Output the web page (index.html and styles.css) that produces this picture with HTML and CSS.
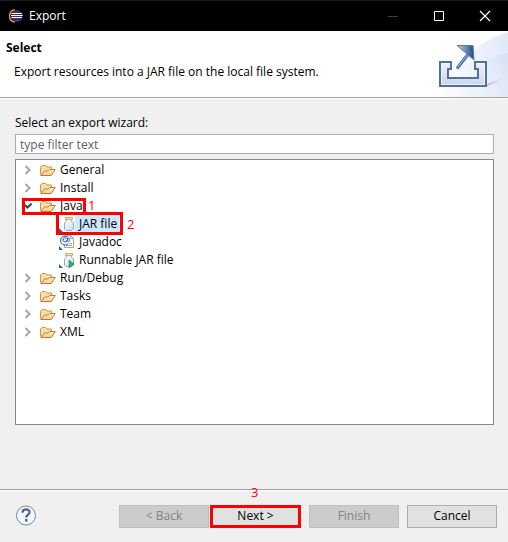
FILE: index.html
```html
<!DOCTYPE html>
<html lang="en">
<head>
<meta charset="utf-8">
<meta name="viewport" content="width=device-width, initial-scale=1">
<title>Export</title>
<link rel="stylesheet" href="styles.css">
</head>
<body>
<svg class="defs" aria-hidden="true">
  <defs>
    <linearGradient id="gold" x1="0" y1="0" x2="0" y2="1"><stop offset="0" stop-color="#fff3cb"/><stop offset="1" stop-color="#f3cb7c"/></linearGradient>
    <linearGradient id="glass" x1="0" y1="0" x2="1" y2="1"><stop offset="0" stop-color="#ffffff"/><stop offset="1" stop-color="#c9def3"/></linearGradient>
    <symbol id="right" viewBox="0 0 8 10"><path d="M1.500 1 5.500 5 1.500 9" fill="none" stroke="#a6a6a6" stroke-width="2"/></symbol>
    <symbol id="down" viewBox="0 0 8 10"><path d="M1 4 3.500 6.500 7.500 2.500" fill="none" stroke="#404040" stroke-width="2"/></symbol>
    <symbol id="folder" viewBox="0 0 16 16">
      <path d="M.5 12.500V5L2 3.500h3.500L7 5h4.500v3" fill="#f9dfa4" stroke="#c9964b"/>
      <path d="M.8 13.500 4.500 9H8l1.500-1.500h5.800l-4 6z" fill="url(#gold)" stroke="#bd7d36" stroke-linejoin="round"/>
    </symbol>
    <symbol id="jar" viewBox="0 0 18 16">
      <path d="M7.500 3.500h5v1.500l2 2v6l-1.500 1.500H7L5.500 13V7l2-2z" fill="url(#glass)" stroke="#8fa9c6"/>
      <path d="M6.500 1.500h7v2h-7z" fill="#f7e3af" stroke="#cfaf68"/>
      <path d="M0 12v4h4z" fill="#2464a0"/>
    </symbol>
    <symbol id="doc" viewBox="0 0 18 16">
      <path d="M5.500 1.500h6l3 3v9h-9z" fill="#fffdf2" stroke="#b5a67c"/>
      <path d="M11.500 1.500v3h3M10 9.500h3M7 11.500h6" fill="none" stroke="#8aa5ca"/>
      <circle cx="6" cy="6" r="4.500" fill="#e7f1fa"/>
      <path d="M9 10A4.500 4.500 0 1 1 10.500 6c0 2.200-2.400 2.200-2.200.3L8.700 4M8 6A2 2 0 1 1 7.500 4.500" fill="none" stroke="#2864a0"/>
      <path d="M0 12v4h4z" fill="#2464a0"/>
    </symbol>
  </defs>
</svg>
<main class="dialog">
  <header class="titlebar">
    <svg class="logo" viewBox="0 0 14 14" aria-hidden="true">
      <path d="M6 .8C-1.200 2-1.200 12 6 13.200" fill="none" stroke="#f7941e" stroke-width="1.400"/>
      <circle cx="7.700" cy="7" r="5.900" fill="#3b2f73"/>
      <path d="M2.500 4.500h10.500M2 6.500h11.800M2.500 8.500h10.500" stroke="#fff"/>
    </svg>
    <h1 class="caption">Export</h1>
    <button class="window-button" type="button" aria-label="Minimize" disabled><svg viewBox="0 0 12 12"><path d="M1 6.500h10" stroke="#404040"/></svg></button>
    <button class="window-button" type="button" aria-label="Maximize"><svg viewBox="0 0 12 12"><path d="M1.500 1.500h9v9h-9z" fill="none" stroke="#fff"/></svg></button>
    <button class="window-button" type="button" aria-label="Close"><svg viewBox="0 0 12 12"><path d="m1 1 10 10M11 1 1 11" stroke="#fff" stroke-width="1.200"/></svg></button>
  </header>

  <section class="banner">
    <div class="intro">
      <h2 class="heading">Select</h2>
      <p class="description">Export resources into a JAR file on the local file system.</p>
    </div>
    <svg class="art" viewBox="0 0 75 66" aria-hidden="true">
      <defs>
        <linearGradient id="sky" x1="0" y1="0" x2="1" y2="0"><stop offset="0" stop-color="#fff"/><stop offset="1" stop-color="#e0e8f8"/></linearGradient>
        <linearGradient id="sweep" x1="0" y1="1" x2="1" y2="0"><stop offset="0" stop-color="#fff" stop-opacity="0"/><stop offset="1" stop-color="#ccd9f4"/></linearGradient>
        <linearGradient id="tray" x1="0" y1="0" x2="0" y2="1"><stop offset="0" stop-color="#edf2fa"/><stop offset="1" stop-color="#cbd6e9"/></linearGradient>
        <linearGradient id="shade" x1="0" y1="0" x2="1" y2="0"><stop offset="0" stop-color="#c4b9c6"/><stop offset="1" stop-color="#dfe5f5" stop-opacity="0"/></linearGradient>
        <linearGradient id="tip" x1="0" y1="0" x2="1" y2="0"><stop offset="0" stop-color="#d0ddec"/><stop offset=".5" stop-color="#7390b8"/><stop offset="1" stop-color="#1d4784"/></linearGradient>
      </defs>
      <path d="M75 1C55 7 38 19 22 35L5 66h70z" fill="url(#sky)"/>
      <path d="M75 22C55 26 42 38 30 66h45z" fill="url(#sweep)" opacity=".55"/>
      <path d="M54 53 73 45 66 51 54 55z" fill="url(#shade)"/>
      <path d="M7 31h11v7h-3v9h30v-9h-3v-7h11v24H7z" fill="url(#tray)" stroke="#4a72a9" stroke-width="2"/>
      <path d="M16.500 32.500H8.500v21h43v-21h-8" fill="none" stroke="#fff" opacity=".7"/>
      <path d="M24 37.500 36.500 21.500" stroke="#426b9f" stroke-width="3"/>
      <path d="M24.500 36.500 36 22" stroke="#a9c0dd"/>
      <path d="M24 14.500H40L41 29z" fill="url(#tip)" stroke="#587ba8"/>
    </svg>
  </section>

  <section class="content">
    <label class="label" for="filter">Select an export wizard:</label>
    <input class="filter" id="filter" type="text" placeholder="type filter text">
    <ul class="tree" role="tree" aria-label="Export wizards">
      <li class="row" role="treeitem"><svg class="arrow"><use href="#right"/></svg><svg class="folder"><use href="#folder"/></svg><span>General</span></li>
      <li class="row" role="treeitem"><svg class="arrow"><use href="#right"/></svg><svg class="folder"><use href="#folder"/></svg><span>Install</span></li>
      <li role="treeitem" aria-expanded="true">
        <div class="row"><svg class="arrow"><use href="#down"/></svg><svg class="folder"><use href="#folder"/></svg><span>Java</span><span class="mark mark-java"></span><span class="step step-java">1</span></div>
        <ul class="children" role="group">
          <li class="row" role="treeitem" aria-selected="true"><svg class="file"><use href="#jar"/></svg><span class="selected">JAR file</span><span class="mark mark-jar"></span><span class="step step-jar">2</span></li>
          <li class="row" role="treeitem"><svg class="file"><use href="#doc"/></svg><span>Javadoc</span></li>
          <li class="row" role="treeitem"><svg class="file" viewBox="0 0 18 16"><use href="#jar"/><path d="m10 8 5 4-5 4z" fill="#3daf66" stroke="#167340" stroke-width=".5"/></svg><span>Runnable JAR file</span></li>
        </ul>
      </li>
      <li class="row" role="treeitem"><svg class="arrow"><use href="#right"/></svg><svg class="folder"><use href="#folder"/></svg><span>Run/Debug</span></li>
      <li class="row" role="treeitem"><svg class="arrow"><use href="#right"/></svg><svg class="folder"><use href="#folder"/></svg><span>Tasks</span></li>
      <li class="row" role="treeitem"><svg class="arrow"><use href="#right"/></svg><svg class="folder"><use href="#folder"/></svg><span>Team</span></li>
      <li class="row" role="treeitem"><svg class="arrow"><use href="#right"/></svg><svg class="folder"><use href="#folder"/></svg><span>XML</span></li>
    </ul>
  </section>

  <footer class="footer">
    <button class="help" type="button" aria-label="Help">
      <svg viewBox="0 0 22 22"><circle cx="11" cy="10.500" r="9.500" fill="#f3f6fa" stroke="#7688a2"/><path d="M7.500 7.700C7.500 3.300 14.800 3.500 14.500 7.500c-.2 2.200-3.300 2.700-3.300 5" fill="none" stroke="#4c6289" stroke-width="2.200"/><path d="M10 14h2.500v2.500H10z" fill="#4c6289"/></svg>
    </button>
    <div class="pair">
      <button class="button" type="button" disabled>&lt; Back</button>
      <div class="next"><button class="button" type="button">Next &gt;</button><span class="mark mark-next"></span><span class="step step-next">3</span></div>
    </div>
    <button class="button" type="button" disabled>Finish</button>
    <button class="button" type="button">Cancel</button>
  </footer>
</main>
</body>
</html>
```
FILE: styles.css
```css
* { box-sizing: border-box; }

body {
  margin: 0;
  background: #f0f0f0;
  color: #000;
  font: 12px/18px "Segoe UI", "Open Sans", "Noto Sans", sans-serif;
}

button, input { font: inherit; }
h1, h2, p, ul { margin: 0; padding: 0; }
ul { list-style: none; }
svg { display: block; flex: none; }
.defs { position: absolute; width: 0; height: 0; }

.dialog {
  display: flex;
  flex-direction: column;
  min-height: 100vh;
}

.titlebar {
  display: flex;
  align-items: center;
  height: 31px;
  padding-left: 9px;
  background: #000;
  border-top: 1px solid #191c1c;
  color: #fff;
}
.logo { width: 14px; height: 14px; }
.caption { flex: 1; margin-left: 6px; font-size: 12px; font-weight: 400; }
.window-button {
  display: grid;
  place-items: center;
  width: 46px;
  height: 30px;
  padding: 0;
  border: 0;
  background: none;
}
.window-button svg { width: 12px; height: 12px; }

.banner {
  display: flex;
  justify-content: space-between;
  height: 67px;
  background: #fff;
  border-bottom: 1px solid #a0a0a0;
}
.intro { padding: 8px 0 0 6px; }
.heading { font-size: 12px; line-height: 18px; }
.description { padding: 6px 0 0 8px; white-space: nowrap; }
.art { width: 75px; height: 66px; }

.content {
  display: flex;
  flex: 1;
  flex-direction: column;
  padding: 15px 14px 64px 15px;
  border-top: 1px solid #fff;
}
.label { height: 20px; }
.filter {
  width: 100%;
  height: 20px;
  padding: 0 4px;
  border: 1px solid #abadb3;
  border-radius: 0;
  background: #fff;
}
.filter::placeholder { color: #606060; opacity: 1; }
.tree {
  flex: 1;
  margin-top: 5px;
  padding: 1px 0 1px 8px;
  background: #fff;
  border: 1px solid #828790;
}
.row {
  position: relative;
  display: flex;
  align-items: center;
  height: 18px;
  white-space: nowrap;
}
.arrow { width: 8px; height: 10px; margin-right: 8px; }
.folder { width: 16px; height: 16px; margin-right: 4px; }
.children { padding-left: 35px; }
.file { width: 18px; height: 16px; margin-right: 2px; }
.selected { margin-left: -4px; padding: 0 2px 0 4px; background: #cce8ff; }

.mark { position: absolute; border: 3px solid #f00; pointer-events: none; }
.mark-java { left: -2px; top: 1px; width: 64px; height: 17px; }
.mark-jar { left: -3px; top: -3px; width: 67px; height: 23px; }
.mark-next { inset: 0; }
.step { position: absolute; color: #f00; font-size: 13px; }
.step-java { left: 64px; top: -1px; }
.step-jar { left: 68px; top: 0; }
.step-next { left: 41px; top: -22px; }

.footer {
  display: flex;
  align-items: center;
  gap: 8px;
  height: 53px;
  padding: 0 11px 0 15px;
  border-top: 1px solid #a0a0a0;
  box-shadow: inset 0 1px #fff;
}
.help {
  margin-right: auto;
  padding: 0;
  border: 0;
  background: none;
}
.help svg { width: 22px; height: 22px; }
.pair { display: flex; gap: 1px; }
.next { position: relative; }
.next .button { width: 91px; }
.button {
  display: block;
  width: 90px;
  height: 23px;
  padding: 0;
  border: 1px solid #adadad;
  border-radius: 0;
  background: #e1e1e1;
  color: #000;
}
.button:disabled { border-color: #bfbfbf; background: #ccc; color: #838383; }
```
